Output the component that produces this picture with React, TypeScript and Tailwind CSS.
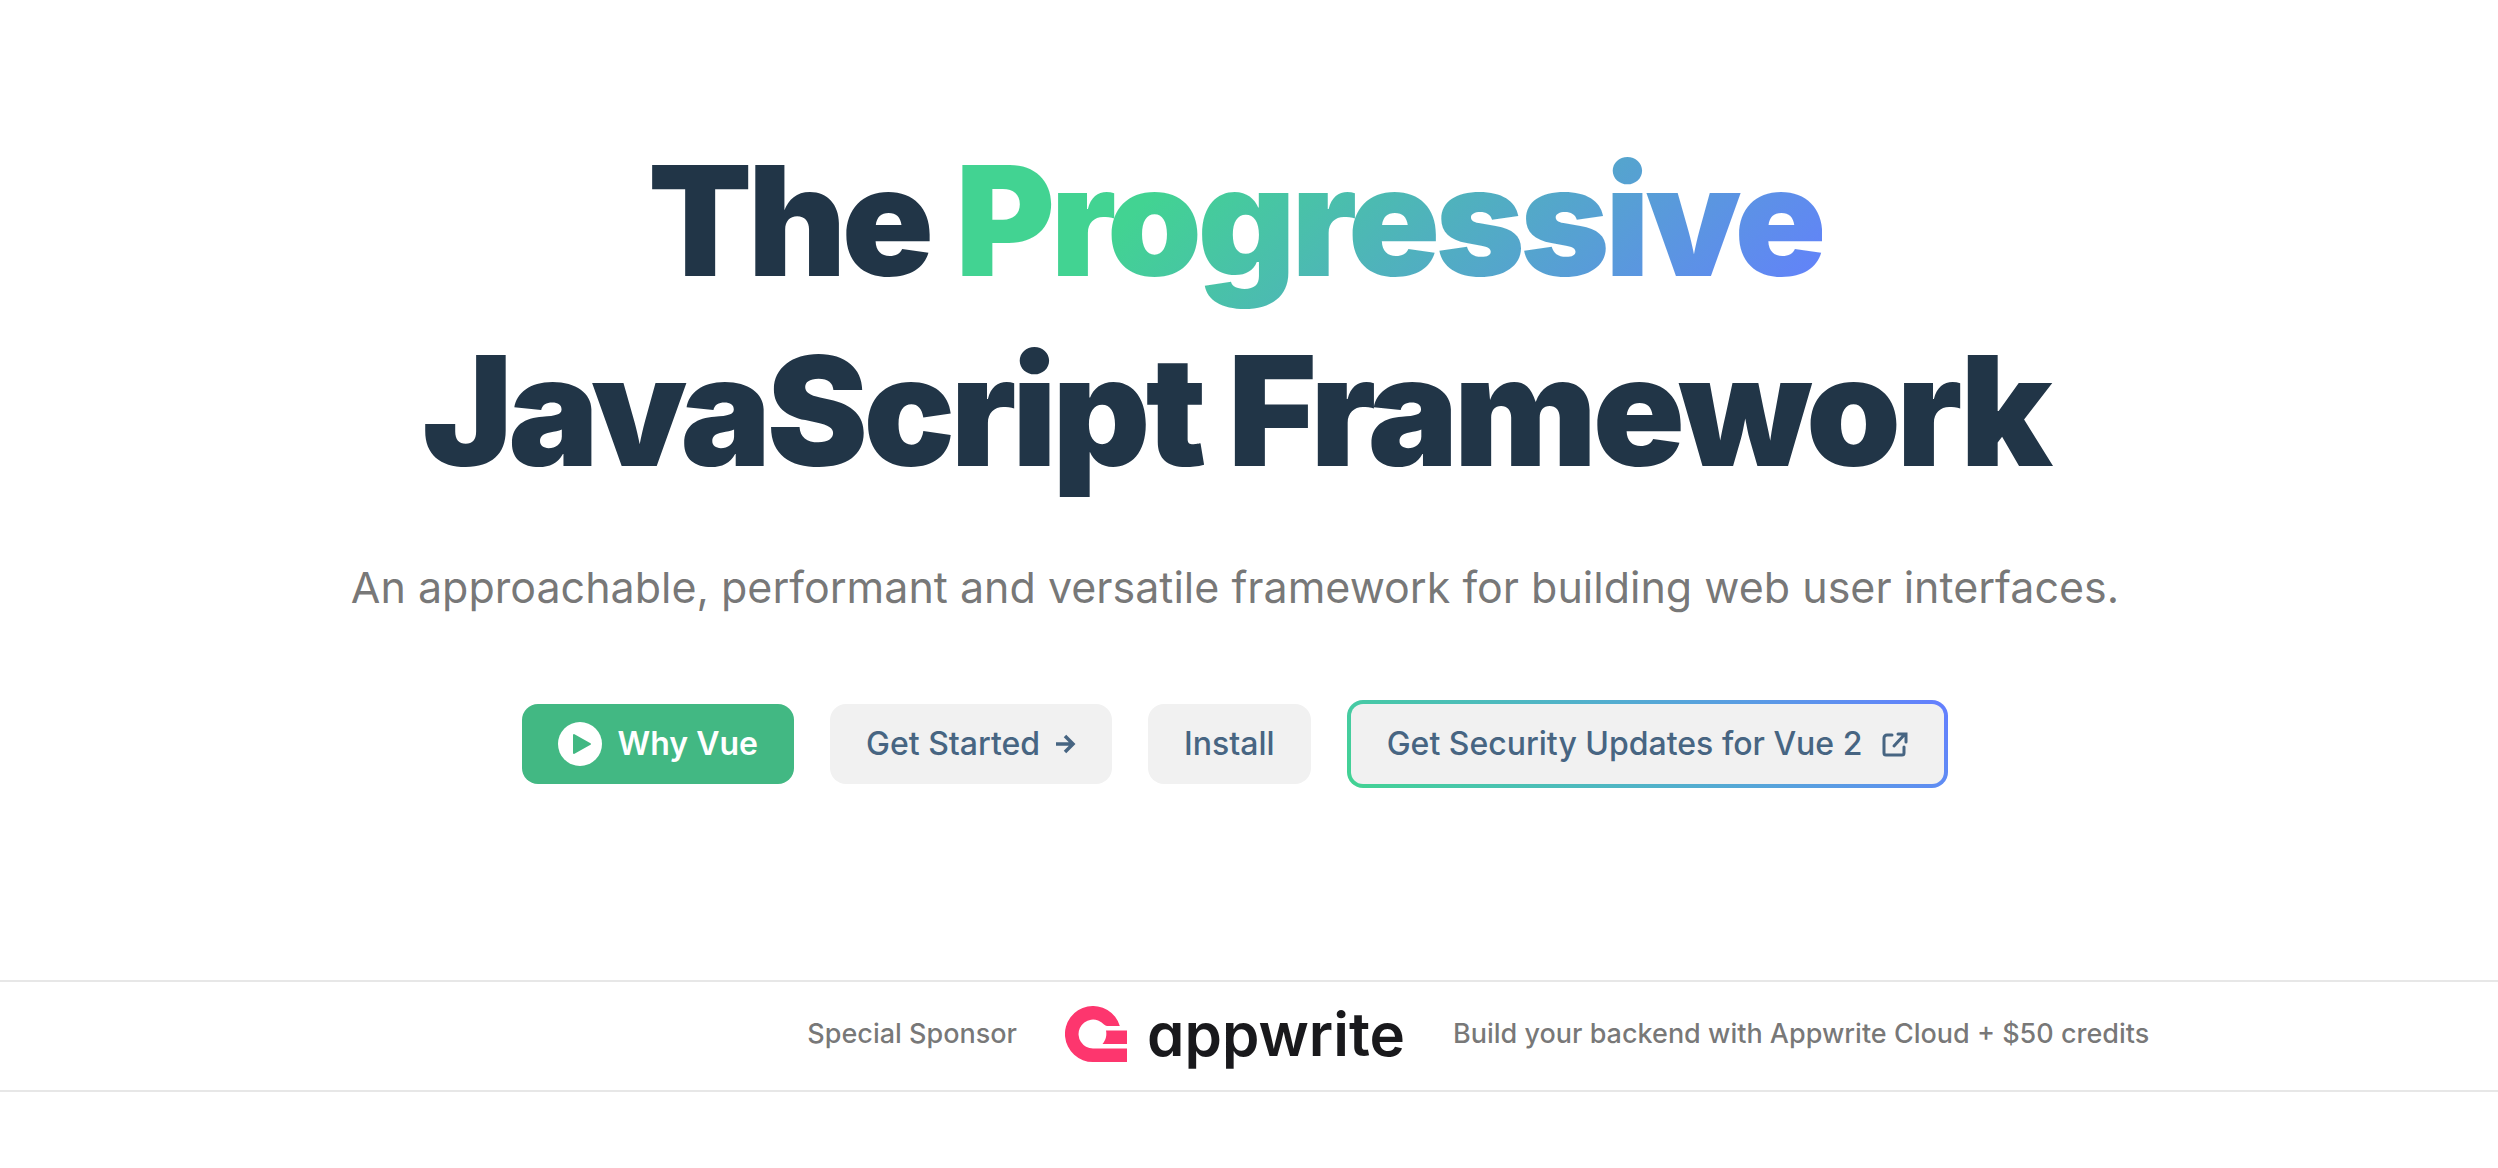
/** Appwrite mark: open ring, a notch and a base bar */
function AppwriteMark() {
  return (
    <svg viewBox="0 0 62 56" className="h-14 w-[62px]" fill="#fd366e" aria-hidden="true">
      <path d="M62 42.500V56H28A28 28 0 1 1 54.800 20H43.500C41.500 20 40.500 20 39 18.500A14.500 14.500 0 1 0 28 42.500Z" />
      <path d="M41 24.500H62V38H37.500C41 34 42 29 41 24.500Z" />
    </svg>
  );
}

function PlayIcon() {
  return (
    <svg viewBox="0 0 44 44" className="size-11" aria-hidden="true">
      <circle cx="22" cy="22" r="22" fill="white" />
      <path d="M16 13v18l16-9z" fill="#42b883" stroke="#42b883" strokeWidth="2" strokeLinejoin="round" />
    </svg>
  );
}

function ArrowIcon() {
  return (
    <svg viewBox="0 0 20 20" className="size-5" fill="none" stroke="currentColor" strokeWidth="3.5" aria-hidden="true">
      <path d="M0 10h17M9 2l8 8-8 8" />
    </svg>
  );
}

function ExternalIcon() {
  return (
    <svg viewBox="0 0 26 26" className="size-[26px]" fill="none" stroke="currentColor" strokeWidth="3" strokeLinecap="round" aria-hidden="true">
      <path d="M10 4H5a3 3 0 0 0-3 3v15a2 2 0 0 0 2 2h16a2 2 0 0 0 2-2v-6" />
      <path d="M16 3h8v8M23 3 12 15" />
    </svg>
  );
}

function Hero() {
  return (
    <section className="pt-[126px] pr-7 pb-48 text-center">
      <h1 className="text-[152px] leading-[190px] font-black tracking-[-0.03em] text-[#213547]">
        The{" "}
        <span className="bg-linear-[135deg] from-[#42d392] from-25% to-[#647eff] bg-clip-text text-transparent">
          Progressive
        </span>
        <br />
        JavaScript Framework
      </h1>
      <p className="mt-12 text-[43px] leading-[66px] text-[#3c3c3c]/70">
        An approachable, performant and versatile framework for building web user interfaces.
      </p>
      <div className="mt-20 flex items-center justify-center gap-9 text-[32px] leading-12 font-medium text-[#476582]">
        <button className="flex h-20 items-center gap-4 rounded-2xl bg-[#42b883] px-9 font-semibold text-white">
          <PlayIcon />
          Why Vue
        </button>
        <a href="#start" className="flex h-20 items-center gap-4 rounded-2xl bg-[#f1f1f1] px-9">
          Get Started
          <ArrowIcon />
        </a>
        <a href="#install" className="flex h-20 items-center rounded-2xl bg-[#f1f1f1] px-9">
          Install
        </a>
        <a href="#security" className="rounded-2xl bg-linear-45 from-[#42d392] to-[#647eff] p-1">
          <span className="flex h-20 items-center gap-5 rounded-xl bg-[#f1f1f1] px-9">
            Get Security Updates for Vue 2
            <ExternalIcon />
          </span>
        </a>
      </div>
    </section>
  );
}

function SponsorBanner() {
  return (
    <aside className="grid grid-cols-[1fr_auto_1fr] items-center gap-12 border-y-2 border-[#e7e7e7] pt-6 pr-7 pb-7 text-[27px] leading-10 font-medium text-[#3c3c3c]/70">
      <span className="text-right">Special Sponsor</span>
      <a href="#appwrite" className="flex items-center gap-5">
        <AppwriteMark />
        <span className="text-[60px] leading-[52px] font-semibold text-[#19191c] [font-feature-settings:'cv11']">
          appwrite
        </span>
      </a>
      <span>Build your backend with Appwrite Cloud + $50 credits</span>
    </aside>
  );
}

export default function App() {
  return (
    <main className="bg-white font-['Inter',sans-serif]">
      <Hero />
      <SponsorBanner />
    </main>
  );
}
